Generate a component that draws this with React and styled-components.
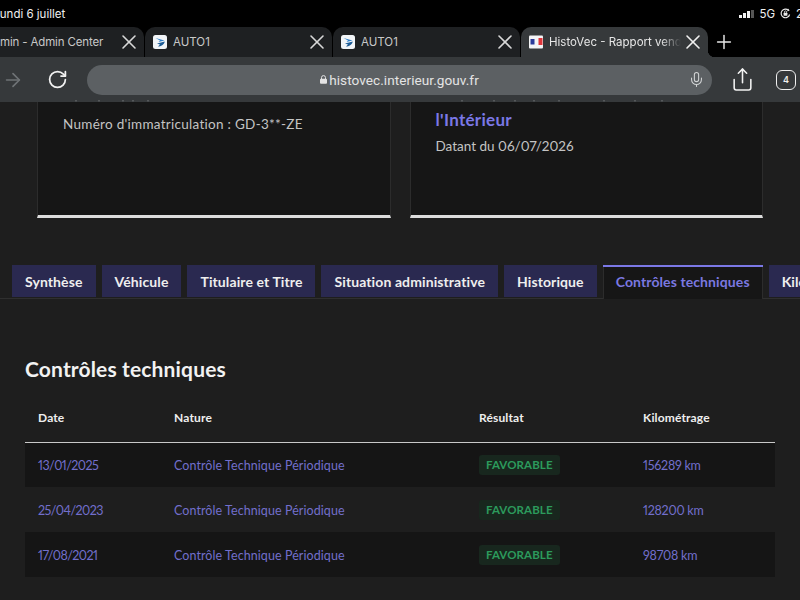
import styled, { createGlobalStyle } from "styled-components";
import { X, Plus, ArrowRight, RotateCw, Mic, Share } from "lucide-react";

const GlobalStyle = createGlobalStyle`
  html, body {
    margin: 0;
    padding: 0;
    background: #1e1e1e;
  }
  * {
    box-sizing: border-box;
  }
`;

const tabs = [
  { title: "min - Admin Center", crop: true },
  { title: "AUTO1", icon: "auto" },
  { title: "AUTO1", icon: "auto" },
  { title: "HistoVec - Rapport vendeur", icon: "flag", active: true },
];

const sections = ["Synthèse", "Véhicule", "Titulaire et Titre", "Situation administrative", "Historique", "Contrôles techniques", "Kilométrage"];

const rows = [
  { date: "13/01/2025", km: "156289 km" },
  { date: "25/04/2023", km: "128200 km" },
  { date: "17/08/2021", km: "98708 km" },
];

const AutoIcon = () => (
  <svg width="14" height="14" viewBox="0 0 14 14">
    <rect width="14" height="14" rx="2.5" fill="#f2f5f8" />
    <path d="M2.5 3 L11.5 5.5 L5.5 7 L7 5.6 Z" fill="#2f80c9" />
    <path d="M4 8.6 L11.8 6.6 C11 10 8 11.6 5 11.6 L7 9.6 Z" fill="#1d5c96" />
  </svg>
);

const FlagIcon = () => (
  <svg width="14" height="14" viewBox="0 0 14 14">
    <rect y="0.5" width="14" height="13" rx="1" fill="#f4f4f6" />
    <rect x="1.5" y="4" width="4" height="5.5" fill="#2b3a9a" />
    <rect x="9.5" y="3" width="4" height="7" fill="#e0363b" />
  </svg>
);

const LockIcon = () => (
  <svg width="7" height="9" viewBox="0 0 7 9" style={{ marginRight: 2 }}>
    <path d="M1.5 4V2.6a2 2 0 0 1 4 0V4" fill="none" stroke="#e4e4e4" strokeWidth="1" />
    <rect y="3.8" width="7" height="5" rx="1" fill="#e4e4e4" />
  </svg>
);

const OrientationIcon = () => (
  <svg width="11" height="11" viewBox="0 0 11 11">
    <path d="M9.6 6.5A4.3 4.3 0 1 1 8.4 2.3" fill="none" stroke="#e8e8e8" strokeWidth="1.2" />
    <path d="M8 0.6 L9.6 2.6 L7.4 3.4 Z" fill="#e8e8e8" />
    <rect x="3.6" y="4.8" width="3.8" height="3" rx="0.5" fill="#e8e8e8" />
    <path d="M4.4 4.9V4a1.1 1.1 0 0 1 2.2 0v0.9" fill="none" stroke="#e8e8e8" strokeWidth="0.8" />
  </svg>
);

// bits of a title scrolled away under the toolbar
const ClippedDots = ({ xs }) => (
  <DotsSvg width="354" height="3" viewBox="0 0 354 3">
    {xs.map((x) => (
      <rect key={x} x={x} y="0" width="2" height="1.5" fill="#55585a" />
    ))}
  </DotsSvg>
);

const App = () => (
  <Page>
    <GlobalStyle />
    <StatusBar>
      <StatusDate>lundi 6 juillet</StatusDate>
      <StatusRight>
        <SignalBars>
          <Bar $h={3} $on />
          <Bar $h={5} $on />
          <Bar $h={7} $on />
          <Bar $h={8} />
        </SignalBars>
        <span>5G</span>
        <OrientationIcon />
        <span>2</span>
      </StatusRight>
    </StatusBar>

    <TabStrip>
      {tabs.map((tab, i) => (
        <BrowserTab key={i} $active={tab.active} $crop={tab.crop}>
          {tab.icon === "auto" && <AutoIcon />}
          {tab.icon === "flag" && <FlagIcon />}
          <TabTitle $active={tab.active} $crop={tab.crop}>
            {tab.title}
          </TabTitle>
          <CloseIcon size={24} strokeWidth={1.6} color={tab.active ? "#f0f0f0" : "#d8d8d8"} />
        </BrowserTab>
      ))}
      <NewTab>
        <Plus size={22} strokeWidth={1.6} color="#e8e8e8" />
      </NewTab>
    </TabStrip>

    <Toolbar>
      <ArrowRight size={22} strokeWidth={1.8} color="#6f7376" />
      <Reload>
        <RotateCw size={21} strokeWidth={2} color="#f2f2f2" />
      </Reload>
      <UrlBar>
        <UrlText>
          <LockIcon />
          histovec.interieur.gouv.fr
        </UrlText>
        <MicButton>
          <Mic size={17} strokeWidth={1.5} color="#d0d2d3" />
        </MicButton>
      </UrlBar>
      <ShareButton>
        <Share size={25} strokeWidth={1.5} color="#f2f2f2" />
      </ShareButton>
      <TabCount>4</TabCount>
    </Toolbar>

    <Content>
      <Cards>
        <Card>
          <ClippedDots xs={[37, 60, 84, 94, 109]} />
          <CardLabel>Numéro d'immatriculation : GD-3**-ZE</CardLabel>
        </Card>
        <Card $right>
          <ClippedDots xs={[50, 82, 103, 122, 147, 192, 223, 250]} />
          <CardLink>l'Intérieur</CardLink>
          <CardDate>Datant du 06/07/2026</CardDate>
        </Card>
      </Cards>

      <SectionTabs>
        {sections.map((s) => (
          <SectionTab key={s} $active={s === "Contrôles techniques"}>
            {s}
          </SectionTab>
        ))}
      </SectionTabs>

      <Panel>
        <Heading>Contrôles techniques</Heading>
        <Table>
          <thead>
            <tr>
              <Th $w={136}>Date</Th>
              <Th $w={305}>Nature</Th>
              <Th $w={164}>Résultat</Th>
              <Th>Kilométrage</Th>
            </tr>
          </thead>
          <tbody>
            {rows.map((r) => (
              <Row key={r.date}>
                <NumberCell $tight>{r.date}</NumberCell>
                <Td>Contrôle Technique Périodique</Td>
                <Td>
                  <Badge>FAVORABLE</Badge>
                </Td>
                <NumberCell>{r.km}</NumberCell>
              </Row>
            ))}
          </tbody>
        </Table>
      </Panel>
    </Content>
  </Page>
);

export default App;

const Page = styled.div`
  width: 800px;
  height: 600px;
  overflow: hidden;
  display: flex;
  flex-direction: column;
  background: #1e1e1e;
  font-family: "Lato", "Liberation Sans", sans-serif;
  font-variant-numeric: proportional-nums;
`;

const StatusBar = styled.div`
  height: 27px;
  flex: none;
  background: #000;
  color: #f0f0f0;
  font-family: "Inter", "Liberation Sans", sans-serif;
  font-size: 11.5px;
  display: flex;
  align-items: center;
  justify-content: space-between;
`;

const StatusDate = styled.span`
  margin-left: -3px;
`;

const StatusRight = styled.div`
  display: flex;
  align-items: center;
  gap: 5px;
  margin-right: -3px;
`;

const SignalBars = styled.div`
  display: flex;
  align-items: flex-end;
  gap: 1px;
`;

const Bar = styled.i`
  width: 3px;
  height: ${(p) => p.$h}px;
  background: ${(p) => (p.$on ? "#f0f0f0" : "#555")};
`;

const TabStrip = styled.div`
  height: 30px;
  flex: none;
  background: #000;
  display: flex;
  gap: 1px;
  margin-left: -43px;
`;

const BrowserTab = styled.div`
  width: 187px;
  flex: none;
  display: flex;
  align-items: center;
  gap: 6px;
  padding: 0 3px 0 ${(p) => (p.$crop ? "43px" : "8px")};
  background: ${(p) => (p.$active ? "#36393b" : "#1e2022")};
  border-radius: 10px 10px 0 0;
  position: relative;

  ${(p) =>
    p.$active &&
    `
    &::after {
      content: "";
      position: absolute;
      right: -7px;
      bottom: 0;
      width: 7px;
      height: 7px;
      background: radial-gradient(circle at 100% 0, transparent 7px, #36393b 7.5px);
    }
  `}
`;

const TabTitle = styled.span`
  flex: 1;
  min-width: 0;
  overflow: hidden;
  white-space: nowrap;
  font-family: "Inter", "Liberation Sans", sans-serif;
  font-size: 11.5px;
  letter-spacing: ${(p) => (p.$crop ? "-0.15px" : "0")};
  color: ${(p) => (p.$active ? "#e6e6e6" : "#c8c8c8")};
  ${(p) =>
    p.$active &&
    `
    mask-image: linear-gradient(to right, #000 85%, transparent 100%);
  `}
`;

const CloseIcon = styled(X)`
  flex: none;
  margin-left: -6px;
`;

const NewTab = styled.div`
  display: flex;
  align-items: center;
  margin-left: 4px;
`;

const Toolbar = styled.div`
  height: 45px;
  flex: none;
  background: #36393b;
  display: flex;
  align-items: center;
  padding: 0 4px 0 2px;
`;

const Reload = styled.div`
  margin-left: 23px;
  display: flex;
`;

const UrlBar = styled.div`
  width: 626px;
  height: 30px;
  margin-left: 19px;
  border-radius: 15px;
  background: #5c6063;
  display: flex;
  align-items: center;
  justify-content: center;
  position: relative;
`;

const UrlText = styled.span`
  font-family: "Roboto", "Liberation Sans", sans-serif;
  font-size: 13.6px;
  letter-spacing: 0.05px;
  color: #e4e4e4;
  display: flex;
  align-items: center;
`;

const MicButton = styled.div`
  position: absolute;
  right: 7px;
  top: 6px;
  display: flex;
`;

const ShareButton = styled.div`
  margin-left: 18px;
  display: flex;
`;

const TabCount = styled.div`
  width: 20px;
  height: 20px;
  margin-left: 21px;
  border: 1.5px solid #f0f0f0;
  border-radius: 6px;
  color: #f0f0f0;
  font-family: "Inter", "Liberation Sans", sans-serif;
  font-size: 9px;
  font-weight: 600;
  display: flex;
  align-items: center;
  justify-content: center;
`;

const Content = styled.div`
  flex: 1;
  min-height: 0;
`;

const Cards = styled.div`
  display: flex;
  gap: 19px;
  padding: 0 37px;
`;

const Card = styled.div`
  width: 354px;
  height: 116px;
  background: #161616;
  border-left: 1px solid #2c2c2c;
  border-right: 1px solid #2c2c2c;
  border-bottom: 3px solid #dcdcdc;
  padding: ${(p) => (p.$right ? "7px 25px 0" : "13px 25px 0")};
  position: relative;
`;

const DotsSvg = styled.svg`
  position: absolute;
  left: 0;
  top: -2px;
`;

const CardLabel = styled.div`
  font-size: 13.5px;
  line-height: 18px;
  letter-spacing: 0.28px;
  color: #c4c4c4;
`;

const CardLink = styled.div`
  font-size: 17px;
  font-weight: 700;
  line-height: 22px;
  letter-spacing: 0.3px;
  color: #7b78e6;
`;

const CardDate = styled(CardLabel)`
  margin-top: 6px;
  letter-spacing: 0;
`;

const SectionTabs = styled.div`
  display: flex;
  align-items: flex-start;
  gap: 6px;
  margin-top: 47px;
  padding-left: 12px;
  height: 34px;
  width: 900px;
`;

const SectionTab = styled.div`
  height: ${(p) => (p.$active ? "34px" : "32px")};
  flex: none;
  padding: ${(p) => (p.$active ? "0 13px 4px" : "0 13px")};
  display: flex;
  align-items: center;
  font-size: 14px;
  font-weight: 700;
  letter-spacing: 0.1px;
  white-space: nowrap;
  color: ${(p) => (p.$active ? "#7b78e0" : "#eeeeee")};
  background: ${(p) => (p.$active ? "#161616" : "#2a2950")};
  border-top: ${(p) => (p.$active ? "2px solid #7b78e6" : "none")};
  box-shadow: ${(p) => (p.$active ? "inset 1px 0 #2c2c2c, inset -1px 0 #2c2c2c" : "none")};
`;

const Panel = styled.div`
  border-top: 1px solid #2f2f2f;
  margin-top: -1px;
  padding: 58px 25px 0;
`;

const Heading = styled.h2`
  margin: 0;
  font-size: 21px;
  line-height: 24px;
  font-weight: 700;
  letter-spacing: 0.15px;
  color: #f2f2f2;
`;

const Table = styled.table`
  width: 750px;
  margin-top: 13px;
  border-collapse: collapse;
  table-layout: fixed;
`;

const Th = styled.th`
  width: ${(p) => (p.$w ? `${p.$w}px` : "auto")};
  height: 48px;
  padding: 0 13px;
  text-align: left;
  font-size: 12px;
  font-weight: 700;
  letter-spacing: 0.15px;
  color: #eeeeee;
  border-bottom: 1px solid #c8c8c8;
`;

const Row = styled.tr`
  height: 45px;
  background: #151515;
  &:nth-child(even) {
    background: #1e1e1e;
  }
`;

const Td = styled.td`
  padding: 1px 13px 0;
  font-size: 12.5px;
  letter-spacing: 0.07px;
  color: #726fcc;
`;

const NumberCell = styled(Td)`
  letter-spacing: ${(p) => (p.$tight ? "-0.55px" : "-0.25px")};
`;

const Badge = styled.span`
  display: inline-block;
  height: 20px;
  line-height: 20px;
  padding: 0 7px;
  border-radius: 3px;
  background: #18271e;
  color: #2c9a5c;
  font-size: 11.5px;
  font-weight: 700;
  letter-spacing: 0.1px;
`;
